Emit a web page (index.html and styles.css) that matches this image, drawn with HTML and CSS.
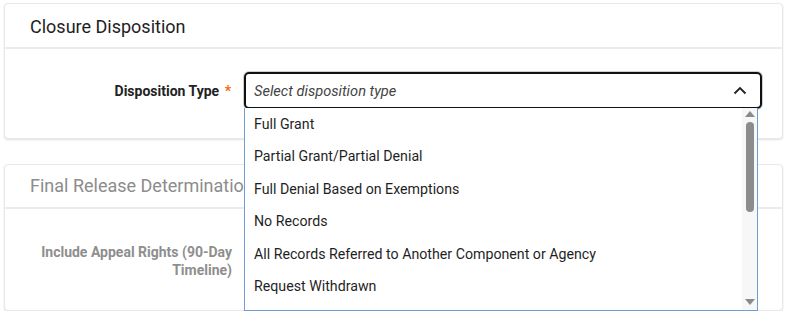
FILE: index.html
```html
<!DOCTYPE html>
<html>
<head>
<meta charset="utf-8">
<link rel="stylesheet" href="styles.css">
</head>
<body>
<div class="page">
  <section class="card">
    <div class="card-head">Closure Disposition</div>
    <div class="card-body">
      <div class="field">
        <label class="label">Disposition Type <span class="req">*</span></label>
        <div class="control">
          <div class="select">
            <span class="placeholder">Select disposition type</span>
            <svg class="chev" width="14" height="9" viewBox="0 0 14 9"><path d="M1.5 7.5 L7 2 L12.5 7.5" fill="none" stroke="#222" stroke-width="1.8"/></svg>
          </div>
          <div class="dropdown">
            <ul class="options">
              <li>Full Grant</li>
              <li>Partial Grant/Partial Denial</li>
              <li>Full Denial Based on Exemptions</li>
              <li>No Records</li>
              <li>All Records Referred to Another Component or Agency</li>
              <li>Request Withdrawn</li>
            </ul>
            <div class="scrollbar">
              <span class="arrow up"></span>
              <span class="thumb"></span>
              <span class="arrow down"></span>
            </div>
          </div>
        </div>
      </div>
    </div>
  </section>
  <section class="card muted">
    <div class="card-head">Final Release Determination</div>
    <div class="card-body body2">
      <div class="field">
        <label class="label">Include Appeal Rights (90-Day Timeline)</label>
        <div class="control">
          <span class="toggle"></span>
        </div>
      </div>
    </div>
  </section>
</div>
</body>
</html>
```
FILE: styles.css
```css
* { box-sizing: border-box; }
html, body { margin: 0; padding: 0; background: #fff; }
body { font-family: Roboto, "Liberation Sans", Arial, sans-serif; color: #1f1f1f; }
.page {
  padding: 3px 7px 0 4px;
  display: flex;
  flex-direction: column;
  gap: 25px;
}
.card {
  background: #fff;
  border: 1px solid #e6e8ec;
  border-radius: 4px;
  box-shadow: 0 1px 2px rgba(0,0,0,0.12);
}
.card-head {
  height: 45px;
  padding: 1px 0 0 25px;
  font-size: 18px;
  line-height: 44px;
  color: #1e1e1e;
  border-bottom: 2px solid #e8ebf0;
}
.muted .card-head { color: #8c8c8c; height: 44px; line-height: 42px; padding-top: 0; }
.card-body {
  height: 89px;
  padding-top: 23px;
}
.body2 { height: 101px; padding-top: 30px; }
.field {
  display: flex;
  align-items: flex-start;
  gap: 13px;
}
.label {
  width: 226px;
  flex: none;
  text-align: right;
  font-size: 14px;
  font-weight: bold;
  color: #222;
  line-height: 18px;
  padding-top: 10px;
}
.muted .label { color: #8e8e8e; padding-top: 4px; width: 227px; }
.req { color: #f26b21; margin-left: 2px; }
.control { position: relative; width: 518px; }
.select {
  height: 37px;
  border: 2px solid #111;
  border-radius: 5px;
  box-shadow: 0 0 0 1px #cfcfcf;
  display: flex;
  align-items: center;
  justify-content: space-between;
  padding: 1px 13px 0 8px;
}
.placeholder {
  font-style: italic;
  font-size: 14.6px;
  color: #444;
}
.chev { display: block; margin-top: -1px; }
.dropdown {
  position: absolute;
  top: 36px;
  left: 0;
  width: 514px;
  height: 203px;
  background: #fff;
  border: 1px solid #6f9fd2;
  border-top: none;
  display: flex;
  z-index: 5;
}
.options {
  list-style: none;
  margin: 0;
  padding: 0;
  flex: 1;
}
.options li {
  height: 32.4px;
  line-height: 32px;
  padding-left: 9px;
  font-size: 14.2px;
  color: #1f1f1f;
}
.scrollbar {
  width: 15px;
  background: #f7f7f7;
  display: flex;
  flex-direction: column;
  align-items: center;
  padding-top: 3px;
}
.arrow {
  width: 0; height: 0;
  border-left: 5px solid transparent;
  border-right: 5px solid transparent;
}
.arrow.up { border-bottom: 6px solid #8a8a8a; }
.arrow.down { border-top: 6px solid #8a8a8a; margin-top: auto; margin-bottom: 5px; }
.thumb {
  width: 8px;
  height: 90px;
  border-radius: 4px;
  background: #8c8c8c;
  margin-top: 5px;
}
.toggle {
  position: absolute;
  left: 0;
  top: 3px;
  width: 3px;
  height: 14px;
  background: #2f5fa8;
  border-radius: 2px;
}
```
